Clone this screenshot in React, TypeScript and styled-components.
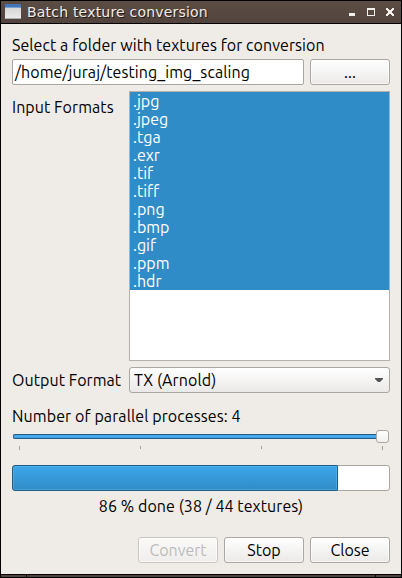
import React from "react";
import styled, { createGlobalStyle } from "styled-components";

const GlobalStyle = createGlobalStyle`
  *, *::before, *::after { box-sizing: border-box; }
  body { margin: 0; overflow: hidden; background: #000; }
`;

const Window = styled.div`
  width: 402px;
  height: 578px;
  padding: 1px 1px 0;
  display: flex;
  flex-direction: column;
  background: #000;
  color: #000;
  font: 16px/18px Ubuntu, "Noto Sans", sans-serif;
`;

const TitleBar = styled.header`
  height: 22px;
  display: flex;
  align-items: center;
  padding: 0 7px 0 4px;
  background: linear-gradient(#5b4c44, #52443d);
  color: #f1ece7;
`;

const Title = styled.h1`
  flex: 1;
  margin: 0 0 0 6px;
  font: 14px/20px "DejaVu Sans", sans-serif;
  letter-spacing: 0.2px;
  text-shadow: 1px 1px 0 #231c18;
  white-space: nowrap;
`;

const Content = styled.main`
  height: 550px;
  margin-top: 1px;
  padding: 12px 11px 11px;
  display: flex;
  flex-direction: column;
  background: #efebe7;
`;

const Text = styled.span<{ $spacing?: number }>`
  white-space: pre;
  letter-spacing: ${({ $spacing = 0 }) => $spacing}px;
`;

const Prompt = styled.label`
  height: 23px;
`;

const FolderRow = styled.div`
  display: grid;
  grid-template-columns: 292px 80px;
  gap: 6px;
`;

const PathInput = styled.div`
  height: 26px;
  padding: 3px 2px;
  border: 1px solid #aaa6a2;
  border-radius: 2px;
  background: #fff;
`;

const Button = styled.button`
  width: 80px;
  height: 26px;
  padding: 0 0 1px;
  border: 1px solid #a9a6a3;
  border-radius: 3px;
  background: linear-gradient(#fff, #ebe9e8);
  box-shadow: inset 0 0 0 1px rgba(255, 255, 255, 0.6);
  color: #000;
  font: inherit;
  &:disabled { border-color: #c9c6c3; color: #bdbbb9; background: linear-gradient(#fbfaf9, #f0eeec); }
`;

const Form = styled.div`
  display: grid;
  grid-template-columns: 117px 261px;
  grid-template-rows: 270px 26px;
  row-gap: 6px;
  margin-top: 6px;
`;

const FieldLabel = styled.label<{ $top: number }>`
  padding-top: ${({ $top }) => $top}px;
`;

const FormatList = styled.ul`
  margin: 0;
  padding: 0;
  border: 1px solid #b4b0ac;
  background: #fff;
  list-style: none;
`;

const FormatItem = styled.li`
  height: 18px;
  padding-left: 3px;
  background: #308cc6;
  color: #fff;
  line-height: 18px;
`;

const Select = styled.div`
  display: flex;
  align-items: center;
  justify-content: space-between;
  padding: 0 6px 0 4px;
  border: 1px solid #a9a6a3;
  border-radius: 3px;
  background: linear-gradient(#fff, #ebe9e8);
`;

const SliderLabel = styled.label`
  height: 18px;
  margin-top: 14px;
`;

const SliderTrack = styled.div`
  display: flex;
  align-items: center;
  height: 13px;
  margin: 5px 1px 0;
`;

const Groove = styled.div`
  width: 363px;
  height: 5px;
  border: 1px solid #206088;
  border-right: 0;
  border-radius: 2px 0 0 2px;
  background: linear-gradient(#3da2e6, #4fb0ef, #3897d8);
`;

const Handle = styled.div`
  width: 13px;
  height: 13px;
  border: 1px solid #aaa7a4;
  border-radius: 3px;
  background: linear-gradient(#fff, #f1f0ef);
`;

const Ticks = styled.div`
  display: flex;
  justify-content: space-between;
  height: 4px;
  margin: 3px 7px 0;
`;

const Tick = styled.i<{ $height: number }>`
  width: 1px;
  height: ${({ $height }) => $height}px;
  background: #a09d9a;
`;

const Progress = styled.div`
  display: flex;
  height: 26px;
  margin-top: 15px;
  border: 1px solid #aaa6a2;
  border-radius: 3px;
  background: #fff;
`;

const ProgressFill = styled.div`
  width: 326px;
  margin: -1px 0 -1px -1px;
  border: 1px solid #206088;
  border-radius: 3px 1px 1px 3px;
  background: linear-gradient(#3da6ea, #308cc6);
  box-shadow: inset 0 0 0 1px rgba(105, 185, 235, 0.45);
`;

const Status = styled.div`
  height: 18px;
  margin-top: 6px;
  text-align: center;
`;

const Actions = styled.div`
  display: flex;
  justify-content: flex-end;
  gap: 6px;
  margin-top: auto;
`;

const BottomFrame = styled.footer`
  display: grid;
  grid-template-columns: 25px 348px 25px;
  gap: 1px;
  height: 2px;
  margin-top: 1px;
`;

const FramePart = styled.div`
  background: #51433c;
`;

const WindowIcon = () => (
  <svg width="16" height="16" viewBox="0 0 16 16" shapeRendering="crispEdges">
    <defs>
      <linearGradient id="pane" x2="0" y2="1">
        <stop stopColor="#d5d5d5" />
        <stop offset="1" stopColor="#ededed" />
      </linearGradient>
    </defs>
    <path fill="#4476b7" d="M0 0h16v4H0z" />
    <path fill="#76a3d7" d="M0 3h16v1H0z" />
    <path fill="url(#pane)" d="M0 4h16v11H0z" />
    <path fill="#aaaead" d="M0 14h16v1H0z" />
  </svg>
);

const WindowControls = () => (
  <svg width="46" height="8" viewBox="0 0 46 8" shapeRendering="crispEdges">
    <path fill="#f3efeb" d="M1 5h6v3H1zM19 0h8v8h-8zM20 2v5h6V2z" fillRule="evenodd" />
    <path fill="#f3efeb" d="M38 0h2v1h1v1h2V1h1V0h2v2h-1v1h-1v2h1v1h1v2h-2V7h-1V6h-2v1h-1v1h-2V6h1V5h1V3h-1V2h-1z" />
  </svg>
);

const formats = [".jpg", ".jpeg", ".tga", ".exr", ".tif", ".tiff", ".png", ".bmp", ".gif", ".ppm", ".hdr"];

export default function App() {
  return (
    <>
      <GlobalStyle />
      <Window>
        <TitleBar>
          <WindowIcon />
          <Title>Batch texture conversion</Title>
          <WindowControls />
        </TitleBar>
        <Content>
          <Prompt><Text $spacing={0.07}>Select a folder with textures for conversion</Text></Prompt>
          <FolderRow>
            <PathInput><Text $spacing={0.09}>/home/juraj/testing_img_scaling</Text></PathInput>
            <Button>...</Button>
          </FolderRow>
          <Form>
            <FieldLabel $top={7}><Text $spacing={0.07}>Input Formats</Text></FieldLabel>
            <FormatList>
              {formats.map((format) => (
                <FormatItem key={format}><Text>{format}</Text></FormatItem>
              ))}
            </FormatList>
            <FieldLabel $top={4}><Text $spacing={0.06}>Output Format</Text></FieldLabel>
            <Select>
              <Text $spacing={0.1}>TX (Arnold)</Text>
              <svg width="8" height="4" viewBox="0 0 8 4"><path fill="#555" d="M0 0h8v1L5 4H3L0 1z" /></svg>
            </Select>
          </Form>
          <SliderLabel><Text $spacing={0.1}>Number of parallel processes: 4</Text></SliderLabel>
          <SliderTrack><Groove /><Handle /></SliderTrack>
          <Ticks><Tick $height={4} /><Tick $height={3} /><Tick $height={3} /><Tick $height={4} /></Ticks>
          <Progress><ProgressFill /></Progress>
          <Status><Text $spacing={0.07}>86 % done (38 / 44 textures)</Text></Status>
          <Actions>
            <Button disabled><Text>Convert</Text></Button>
            <Button><Text>Stop</Text></Button>
            <Button><Text>Close</Text></Button>
          </Actions>
        </Content>
        <BottomFrame><FramePart /><FramePart /><FramePart /></BottomFrame>
      </Window>
    </>
  );
}
